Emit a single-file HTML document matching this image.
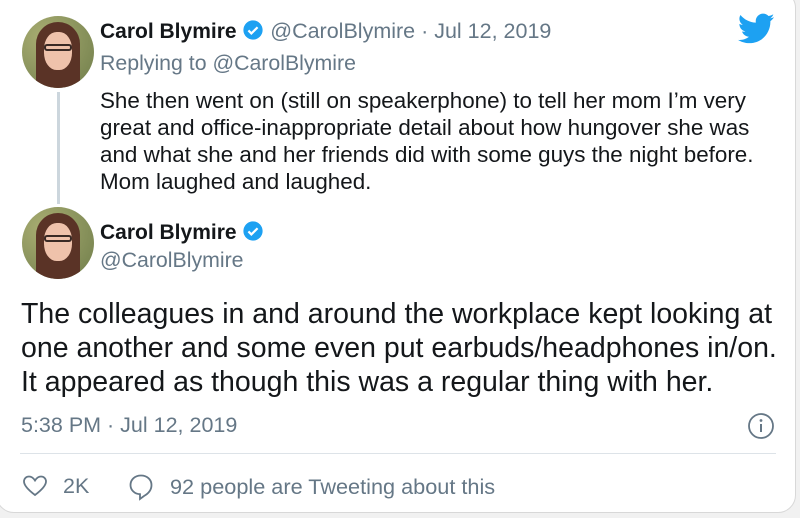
<!DOCTYPE html>
<html><head><style>
body{margin:0;width:800px;height:518px;background:#f1f1f1;font-family:"Liberation Sans",sans-serif;overflow:hidden;position:relative}
.card{position:absolute;left:-4px;top:-10px;width:800px;height:523px;background:#fff;border:1px solid #d8d8d8;border-radius:18px;box-sizing:border-box}
.a{position:absolute}
.av{position:absolute;width:72px;height:72px;border-radius:50%;overflow:hidden;background:radial-gradient(circle at 30% 30%,#a9ad72,#6f7d4a)}
.av i{position:absolute;left:14px;top:6px;width:44px;height:70px;border-radius:22px 22px 6px 6px;background:#5a3326}
.av b{position:absolute;left:22px;top:16px;width:28px;height:38px;border-radius:45%;background:#efc2ab}
.av s{position:absolute;left:22px;top:28px;width:28px;height:7px;border:2px solid #3a2a25;border-radius:3px;box-sizing:border-box}
.t{position:absolute;white-space:nowrap;color:#14171a}
.g{color:#657786}
</style></head><body>
<div class="card"></div>
<div class="av" style="left:22px;top:16px"><i></i><b></b><s></s></div>
<div class="a" style="left:57px;top:92px;width:3px;height:112px;background:#ccd6dd"></div>
<div class="t" style="left:100px;top:19px;font-size:21px"><b>Carol Blymire</b> <svg width="22" height="22" viewBox="0 0 24 24" style="vertical-align:-3px"><circle cx="12" cy="12" r="10.5" fill="#1da1f2"/><path d="M7 12.5l3.2 3.2L17 9" stroke="#fff" stroke-width="2.4" fill="none"/></svg> <span class="g" style="font-size:21.5px">@CarolBlymire · Jul 12, 2019</span></div>
<div class="t g" style="left:100px;top:51px;font-size:21.3px">Replying to @CarolBlymire</div>
<div class="t" style="left:100px;top:87px;font-size:22.4px;line-height:27px">She then went on (still on speakerphone) to tell her mom I’m very<br>great and office-inappropriate detail about how hungover she was<br>and what she and her friends did with some guys the night before.<br>Mom laughed and laughed.</div>
<svg class="a" style="left:738px;top:13px" width="37" height="32" viewBox="0 0 24 20"><path fill="#1da1f2" d="M23.6 2.3c-.9.4-1.8.6-2.8.8 1-.6 1.8-1.6 2.1-2.7-.9.6-2 1-3.1 1.2C18.9.6 17.6 0 16.3 0c-2.7 0-4.8 2.2-4.8 4.8 0 .4 0 .8.1 1.1C7.5 5.7 4 3.8 1.6.9c-.4.7-.7 1.6-.7 2.4 0 1.7.9 3.2 2.2 4-.8 0-1.5-.2-2.2-.6v.1c0 2.3 1.7 4.3 3.9 4.7-.4.1-.8.2-1.3.2-.3 0-.6 0-.9-.1.6 1.9 2.4 3.3 4.5 3.4-1.7 1.3-3.7 2.1-6 2.1-.4 0-.8 0-1.2-.1 2.1 1.4 4.7 2.2 7.4 2.2 8.9 0 13.7-7.4 13.7-13.7v-.6c1-.7 1.8-1.6 2.4-2.5z"/></svg>
<div class="av" style="left:22px;top:207px"><i></i><b></b><s></s></div>
<div class="t" style="left:100px;top:220px;font-size:21px"><b>Carol Blymire</b> <svg width="22" height="22" viewBox="0 0 24 24" style="vertical-align:-3px"><circle cx="12" cy="12" r="10.5" fill="#1da1f2"/><path d="M7 12.5l3.2 3.2L17 9" stroke="#fff" stroke-width="2.4" fill="none"/></svg></div>
<div class="t g" style="left:100px;top:248px;font-size:21.3px">@CarolBlymire</div>
<div class="t" style="left:21px;top:297px;font-size:28.5px;line-height:34px">The colleagues in and around the workplace kept looking at<br>one another and some even put earbuds/headphones in/on.<br>It appeared as though this was a regular thing with her.</div>
<div class="t g" style="left:21px;top:413px;font-size:21.5px">5:38 PM · Jul 12, 2019</div>
<svg class="a" style="left:747px;top:412px" width="28" height="28" viewBox="0 0 28 28"><circle cx="14" cy="14" r="12" stroke="#657786" stroke-width="1.8" fill="none"/><circle cx="14" cy="8.5" r="1.4" fill="#657786"/><path d="M14 12v8" stroke="#657786" stroke-width="2"/></svg>
<div class="a" style="left:20px;top:453px;width:756px;height:1px;background:#dde3e8"></div>
<svg class="a" style="left:22px;top:474px" width="26" height="24" viewBox="0 0 26 24"><path d="M13 21C5 15 2 11 2 7.5 2 4.5 4.3 2.5 7 2.5c2.6 0 4.6 1.8 6 4 1.4-2.2 3.4-4 6-4 2.7 0 5 2 5 5 0 3.5-3 7.5-11 13.5z" stroke="#657786" stroke-width="1.8" fill="none"/></svg>
<div class="t g" style="left:63px;top:474px;font-size:21.5px">2K</div>
<svg class="a" style="left:128px;top:473px" width="26" height="28" viewBox="0 0 26 28"><path d="M13 2.5C7 2.5 2.5 6.5 2.5 12c0 5 4 9 9.5 9.2V26l4-3c4.5-2.5 7.5-6.3 7.5-11 0-5.5-4.5-9.5-10.5-9.5z" stroke="#657786" stroke-width="1.8" fill="none"/></svg>
<div class="t g" style="left:170px;top:474px;font-size:21.7px">92 people are Tweeting about this</div>
</body></html>
